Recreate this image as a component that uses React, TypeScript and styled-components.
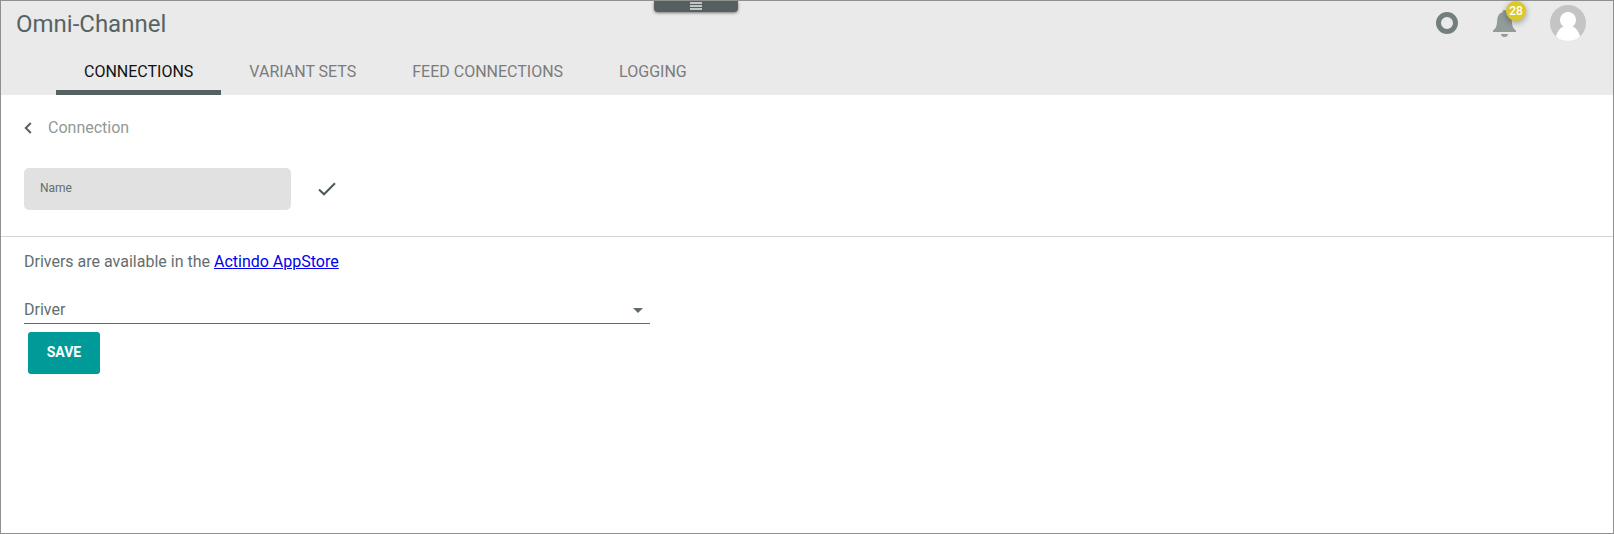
import React from 'react';
import styled, { createGlobalStyle } from 'styled-components';

const GlobalStyle = createGlobalStyle`
  *, *::before, *::after { box-sizing: border-box; }
  body { margin: 0; background: #fff; font-family: Roboto, sans-serif; }
`;

const Window = styled.div`
  position: relative;
  height: 100vh;
  border: 1px solid #909090;
  background: #fff;
  color: #636e6e;
  font-size: 16px;
  line-height: 19px;
  overflow: hidden;
`;

const Header = styled.header`
  height: 94px;
  background: #eaeaea;
  display: flex;
  flex-direction: column;
  justify-content: space-between;
`;

const TitleBar = styled.div`
  display: flex;
  align-items: flex-start;
  justify-content: space-between;
  height: 44px;
  padding: 0 27px 0 15px;
`;

const Title = styled.h1`
  margin: 9px 0 0;
  font-size: 24px;
  line-height: 28px;
  font-weight: 400;
  color: #566363;
`;

const Actions = styled.div`
  display: flex;
  align-items: flex-start;
`;

const StatusRing = styled.div`
  width: 22px;
  height: 22px;
  margin: 11px 35px 0 0;
  border: 5px solid #737e7e;
  border-radius: 50%;
`;

const Notifications = styled.div`
  position: relative;
  width: 23px;
  height: 27px;
  margin: 9px 34px 0 0;

  svg { display: block; }
`;

const Badge = styled.span`
  position: absolute;
  left: 13px;
  top: -9px;
  width: 20px;
  height: 20px;
  padding-top: 3px;
  border-radius: 50%;
  background: #dcc828;
  color: #fff;
  font-size: 12px;
  line-height: 14px;
  font-weight: 500;
  text-align: center;
  box-shadow: 0 2px 6px rgba(0, 0, 0, 0.35);
`;

const Avatar = styled.svg`
  display: block;
  width: 36px;
  height: 36px;
  margin-top: 4px;
`;

const Handle = styled.div`
  position: absolute;
  top: 0;
  left: 653px;
  width: 84px;
  height: 11px;
  border-radius: 0 0 4px 4px;
  background: #566060;
  box-shadow: 0 1px 3px rgba(0, 0, 0, 0.5);
  display: flex;
  flex-direction: column;
  align-items: center;
  gap: 1px;
  padding-top: 1px;
`;

const HandleLine = styled.span`
  width: 12px;
  height: 2px;
  background: #c0c5c5;
`;

const Tabs = styled.nav`
  display: flex;
  height: 47px;
  padding-left: 55px;
`;

const Tab = styled.a<{ $active?: boolean }>`
  padding: 14px 28px 0;
  color: ${(p) => (p.$active ? '#111' : '#7b7b7b')};
  box-shadow: ${(p) => (p.$active ? 'inset 0 -5px 0 #546160' : 'none')};
`;

const Breadcrumb = styled.div`
  display: flex;
  align-items: flex-start;
  height: 64px;
  padding: 23px 0 0 22px;
  gap: 16px;
  color: #919999;

  svg { display: block; margin-top: 4px; }
`;

const NameRow = styled.div`
  display: flex;
  align-items: center;
  height: 78px;
  padding: 9px 23px 26px;
  border-bottom: 1px solid #d5d7d7;
`;

const NameField = styled.div`
  width: 267px;
  height: 42px;
  padding: 13px 16px 0;
  border-radius: 5px;
  background: #e1e1e1;
  font-size: 12px;
  line-height: 14px;
`;

const CheckIcon = styled.svg`
  display: block;
  margin-left: 27px;
`;

const Content = styled.main`
  padding: 15px 23px;
`;

const Hint = styled.p`
  margin: 0;

  a { color: #0000ee; }
`;

const DriverSelect = styled.div`
  display: flex;
  align-items: flex-start;
  justify-content: space-between;
  width: 626px;
  height: 38px;
  margin-top: 15px;
  padding: 14px 7px 0 0;
  border-bottom: 1px solid #5f6b6b;

  svg { display: block; margin-top: 8px; }
`;

const SaveButton = styled.button`
  display: flex;
  align-items: flex-start;
  justify-content: center;
  width: 72px;
  height: 42px;
  margin: 8px 0 0 4px;
  padding: 12px 0 0;
  border: 0;
  border-radius: 3px;
  background: #009b98;
  color: #fff;
  font: 700 14px/16px Roboto, sans-serif;
`;

const tabs = ['CONNECTIONS', 'VARIANT SETS', 'FEED CONNECTIONS', 'LOGGING'];

export default function App() {
  return (
    <Window>
      <GlobalStyle />
      <Header>
        <TitleBar>
          <Title>Omni-Channel</Title>
          <Actions>
            <StatusRing />
            <Notifications>
              <svg width="23" height="27" viewBox="0 0 23 27" fill="#929a9a">
                <path d="M11.500 0a2 2 0 0 1 2 2.300C17 3.400 18.600 6 18.800 10c.2 6 1.200 8.500 4.200 10.500V22H0v-1.500C3 18.500 4 16 4.200 10 4.400 6 6 3.400 9.500 2.300A2 2 0 0 1 11.500 0z" />
                <path d="M8 24h7c0 1.800-1.500 3-3.500 3S8 25.800 8 24z" />
              </svg>
              <Badge>28</Badge>
            </Notifications>
            <Avatar viewBox="0 0 36 36">
              <circle cx="18" cy="18" r="18" fill="#c4c4c4" />
              <circle cx="18" cy="15" r="8" fill="#fff" />
              <path d="M6 31.400C7.500 25.500 11 22 14 21.500h8c3 .5 6.500 4 8 9.900A18 18 0 0 1 6 31.400z" fill="#fff" />
            </Avatar>
          </Actions>
        </TitleBar>
        <Tabs>
          {tabs.map((label, i) => (
            <Tab key={label} $active={i === 0}>{label}</Tab>
          ))}
        </Tabs>
      </Header>
      <Handle>
        <HandleLine />
        <HandleLine />
        <HandleLine />
      </Handle>
      <Breadcrumb>
        <svg width="9" height="12" viewBox="0 0 9 12" fill="none" stroke="#566363" strokeWidth="2">
          <path d="M7.800 1 2.800 6l5 5" />
        </svg>
        <span>Connection</span>
      </Breadcrumb>
      <NameRow>
        <NameField>Name</NameField>
        <CheckIcon width="18" height="14" viewBox="0 0 18 14" fill="none" stroke="#4d5959" strokeWidth="2">
          <path d="M1 7.500 6 12.300 17 1.200" />
        </CheckIcon>
      </NameRow>
      <Content>
        <Hint>
          Drivers are available in the <a href="#appstore">Actindo AppStore</a>
        </Hint>
        <DriverSelect>
          <span>Driver</span>
          <svg width="10" height="5" viewBox="0 0 10 5" fill="#5f6b6b">
            <path d="M0 0h10L5 5z" />
          </svg>
        </DriverSelect>
        <SaveButton>SAVE</SaveButton>
      </Content>
    </Window>
  );
}
